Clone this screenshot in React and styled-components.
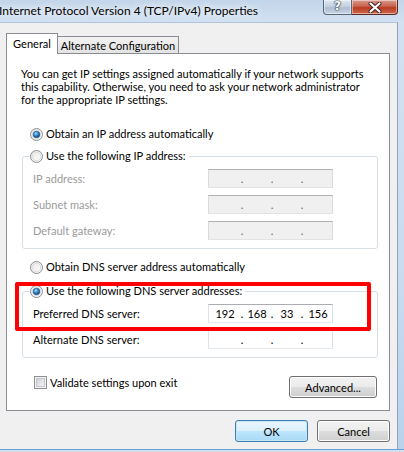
import React from "react";
import styled, { createGlobalStyle } from "styled-components";

const GlobalStyle = createGlobalStyle`
  html, body { margin: 0; padding: 0; }
  body {
    width: 404px; height: 452px; overflow: hidden;
    font-family: Lato, "Noto Sans", sans-serif;
    font-size: 11.05px; color: #000;
  }
  * { box-sizing: border-box; }
`;

const Window = styled.div`
  width: 404px; height: 452px;
  display: flex; flex-direction: column;
  background: linear-gradient(180deg, #c3d5ea 0px, #d2e1f1 22px, #c9dcf0 60%, #b8d2ec 100%);
`;

const TitleBar = styled.div`
  height: 22px; flex: none;
  display: flex; align-items: flex-start; justify-content: space-between;
`;

const Title = styled.div`
  font-size: 12px; line-height: 22px; white-space: nowrap;
  margin-left: -1px;
  text-shadow: 0 0 6px #fff, 0 0 8px #fff;
`;

const Captions = styled.div`
  display: flex; margin-right: 6px; height: 15px;
`;

const CaptionBtn = styled.div`
  width: ${p => p.$w}px; height: 15px;
  display: flex; align-items: center; justify-content: center;
  border: 1px solid ${p => p.$close ? "#5e2a22" : "#5a6576"};
  border-top: none;
  border-left: ${p => p.$close ? "none" : undefined};
  border-radius: ${p => p.$close ? "0 0 4px 0" : "0 0 0 4px"};
  background: ${p => p.$close
    ? "linear-gradient(180deg, #d89a8e 0%, #c9614d 45%, #b83a22 55%, #d06a4c 100%)"
    : "linear-gradient(180deg, #dfe8f2 0%, #c4d1e0 45%, #aebdd0 55%, #c8d6e6 100%)"};
  box-shadow: inset 0 0 0 1px rgba(255,255,255,0.45);
`;

const HelpGlyph = styled.span`
  font-family: "DejaVu Sans", sans-serif; font-weight: bold; font-size: 12px;
  line-height: 12px; color: #fff; margin-top: -2px;
  text-shadow: 0 0 1px #2c3440, 0 0 1px #2c3440, 0 0 2px #2c3440;
`;

const Client = styled.div`
  flex: none; height: 427px; width: 398px;
  background: #f0f0f0;
  border-top: 1px solid #b3c3d6;
  border-right: 1px solid #8fa3bb;
  padding: 10px 0 0 6px;
  display: flex; flex-direction: column;
`;

const BottomEdge = styled.div`
  flex: none; height: 3px; border-top: 1px solid #6a9fd3;
  background: #cfe0f2;
`;

const TabStrip = styled.div`
  display: flex; align-items: flex-end; height: 21px;
  margin-bottom: -1px; position: relative; z-index: 1;
`;

const Tab = styled.div`
  height: ${p => (p.$active ? 21 : 18)}px;
  width: ${p => p.$w}px;
  display: flex; align-items: center; justify-content: center;
  white-space: nowrap;
  border: 1px solid #898c95;
  border-left: ${p => (p.$active ? "1px solid #898c95" : "none")};
  border-bottom: ${p => (p.$active ? "none" : "1px solid #898c95")};
  background: ${p => (p.$active ? "#fff" : "linear-gradient(180deg, #f2f2f2, #e3e3e3)")};
  padding-bottom: ${p => (p.$active ? 2 : 0)}px;
`;

const Panel = styled.div`
  width: 384px; height: 358px;
  border: 1px solid #898c95;
  background: #fff;
  position: relative;
  display: flex; flex-direction: column;
`;

const Para = styled.p`
  margin: 13px 0 0 14px; line-height: 13px; white-space: nowrap;
`;

const RadioRow = styled.label`
  display: flex; align-items: center; gap: 3px;
  height: 16px; margin: ${p => p.$mt}px 0 0 23px;
  line-height: 16px; width: fit-content; white-space: nowrap;
`;

const GroupBox = styled.div`
  margin: ${p => p.$mt}px 0 0 15px; width: 356px;
  border: 1px solid #d5dfe5; border-radius: 3px;
  padding-bottom: 8px;
  display: flex; flex-direction: column; gap: 7px;
`;

const Legend = styled.label`
  display: flex; align-items: center; gap: 3px;
  height: 16px; margin: -9px 0 -2px 7px; padding-right: 3px;
  background: #fff; width: fit-content; line-height: 16px; white-space: nowrap;
`;

const FieldRow = styled.div`
  display: grid; grid-template-columns: 185px 125px;
  align-items: center; height: 19px;
`;

const FieldLabel = styled.span`
  padding-left: 10px; white-space: nowrap;
  color: ${p => (p.$disabled ? "#9a9a9a" : "#000")};
`;

const IpBox = styled.div`
  height: 19px; width: 125px;
  display: flex; align-items: center;
  padding-left: 1px;
  background: ${p => (p.$disabled ? "#f0f0f0" : "#fff")};
  border: 1px solid;
  border-color: ${p => (p.$disabled ? "#adb2b5 #dadada #e3e3e3 #dadada" : "#abadb3 #dbdfe6 #e3e9ef #e2e3ea")};
  line-height: 17px;
`;

const IpField = styled.span`
  width: ${p => p.$w}px; flex: ${p => (p.$w ? "none" : 1)};
  text-align: center;
`;

const IpDot = styled.span`
  width: 4px; text-align: center;
  color: ${p => (p.$disabled ? "#5c6670" : "#000")};
`;

const BottomRow = styled.div`
  display: flex; justify-content: space-between; align-items: flex-start;
  margin: 18px 12px 0 27px;
`;

const CheckLabel = styled.label`
  display: flex; align-items: center; gap: 3px; height: 13px; line-height: 13px;
  white-space: nowrap;
`;

const Button = styled.button`
  width: ${p => p.$w}px; height: ${p => p.$h || 22}px;
  font-family: inherit; font-size: 11.05px; color: #000;
  border: 1px solid ${p => (p.$default ? "#3c7fb1" : "#707070")};
  border-radius: 3px; padding: 0;
  background: ${p => (p.$default
    ? "linear-gradient(180deg, #eaf6fd 0%, #d9f0fc 50%, #bee6fd 51%, #a7d9f5 100%)"
    : "linear-gradient(180deg, #f2f2f2 0%, #ebebeb 50%, #dddddd 51%, #cfcfcf 100%)")};
  box-shadow: inset 0 0 0 1px ${p => (p.$default ? "#c6e6f8" : "#fcfcfc")};
`;

const ButtonRow = styled.div`
  display: flex; justify-content: flex-end; gap: 9px;
  margin-top: 9px; padding-right: 7px;
`;

const Highlight = styled.div`
  position: absolute; left: 8px; top: 228px;
  width: 356px; height: 49px;
  border: 4px solid #ff0000; border-radius: 2px;
  pointer-events: none;
`;

function Radio({ checked }) {
  return (
    <svg width="13" height="13" viewBox="0 0 13 13">
      <defs>
        <linearGradient id="rbg" x1="0" y1="0" x2="1" y2="1">
          <stop offset="0" stopColor="#e8e8e8" />
          <stop offset="1" stopColor="#fdfdfd" />
        </linearGradient>
        <radialGradient id="rdot" cx="0.4" cy="0.35" r="0.7">
          <stop offset="0" stopColor="#a8e2ff" />
          <stop offset="0.5" stopColor="#2c82c9" />
          <stop offset="1" stopColor="#123e6e" />
        </radialGradient>
      </defs>
      <circle cx="6.5" cy="6.5" r="6" fill="url(#rbg)" stroke="#8c8f94" />
      <circle cx="6.5" cy="6.5" r="4.3" fill="none" stroke="#dcdcdc" strokeWidth="1" />
      {checked && <circle cx="6.5" cy="6.5" r="3.3" fill="url(#rdot)" stroke="#1d4e80" strokeWidth="0.6" />}
    </svg>
  );
}

function Checkbox() {
  return (
    <svg width="13" height="13" viewBox="0 0 13 13">
      <defs>
        <linearGradient id="cbg" x1="0" y1="0" x2="1" y2="1">
          <stop offset="0" stopColor="#cbcfd5" />
          <stop offset="1" stopColor="#f6f6f6" />
        </linearGradient>
      </defs>
      <rect x="0.5" y="0.5" width="12" height="12" fill="#f4f4f4" stroke="#8f8f8f" />
      <rect x="2.5" y="2.5" width="8" height="8" fill="url(#cbg)" stroke="#c4c8ce" />
    </svg>
  );
}

function Ip({ values, disabled }) {
  const v = values || ["", "", "", ""];
  return (
    <IpBox $disabled={disabled}>
      <IpField $w={30}>{v[0]}</IpField>
      <IpDot $disabled={disabled}>.</IpDot>
      <IpField $w={26}>{v[1]}</IpField>
      <IpDot $disabled={disabled}>.</IpDot>
      <IpField $w={26}>{v[2]}</IpField>
      <IpDot $disabled={disabled}>.</IpDot>
      <IpField>{v[3]}</IpField>
    </IpBox>
  );
}

export default function App() {
  return (
    <>
      <GlobalStyle />
      <Window>
        <TitleBar>
          <Title>Internet Protocol Version 4 (TCP/IPv4) Properties</Title>
          <Captions>
            <CaptionBtn $w={29}><HelpGlyph>?</HelpGlyph></CaptionBtn>
            <CaptionBtn $w={46} $close>
              <svg width="14" height="11" viewBox="0 0 14 11">
                <path d="M2.5 1.5 L11.5 9.5 M11.5 1.5 L2.5 9.5" stroke="#3a2420" strokeWidth="4" strokeLinecap="round" />
                <path d="M2.5 1.5 L11.5 9.5 M11.5 1.5 L2.5 9.5" stroke="#fff" strokeWidth="2.2" strokeLinecap="round" />
              </svg>
            </CaptionBtn>
          </Captions>
        </TitleBar>
        <Client>
          <TabStrip>
            <Tab $active $w={52}>General</Tab>
            <Tab $w={121}>Alternate Configuration</Tab>
          </TabStrip>
          <Panel>
            <Para>
              You can get IP settings assigned automatically if your network supports
              <br />this capability. Otherwise, you need to ask your network administrator
              <br />for the appropriate IP settings.
            </Para>
            <RadioRow $mt={20}><Radio checked />Obtain an IP address automatically</RadioRow>
            <GroupBox $mt={14}>
              <Legend><Radio />Use the following IP address:</Legend>
              <FieldRow><FieldLabel $disabled>IP address:</FieldLabel><Ip disabled /></FieldRow>
              <FieldRow><FieldLabel $disabled>Subnet mask:</FieldLabel><Ip disabled /></FieldRow>
              <FieldRow><FieldLabel $disabled>Default gateway:</FieldLabel><Ip disabled /></FieldRow>
            </GroupBox>
            <RadioRow $mt={10}><Radio />Obtain DNS server address automatically</RadioRow>
            <GroupBox $mt={16}>
              <Legend><Radio checked />Use the following DNS server addresses:</Legend>
              <FieldRow><FieldLabel>Preferred DNS server:</FieldLabel><Ip values={["192", "168", "33", "156"]} /></FieldRow>
              <FieldRow><FieldLabel>Alternate DNS server:</FieldLabel><Ip /></FieldRow>
            </GroupBox>
            <BottomRow>
              <CheckLabel><Checkbox />Validate settings upon exit</CheckLabel>
              <Button $w={88} $h={22}>Advanced...</Button>
            </BottomRow>
            <Highlight />
          </Panel>
          <ButtonRow>
            <Button $w={73} $default>OK</Button>
            <Button $w={73}>Cancel</Button>
          </ButtonRow>
        </Client>
        <BottomEdge />
      </Window>
    </>
  );
}
